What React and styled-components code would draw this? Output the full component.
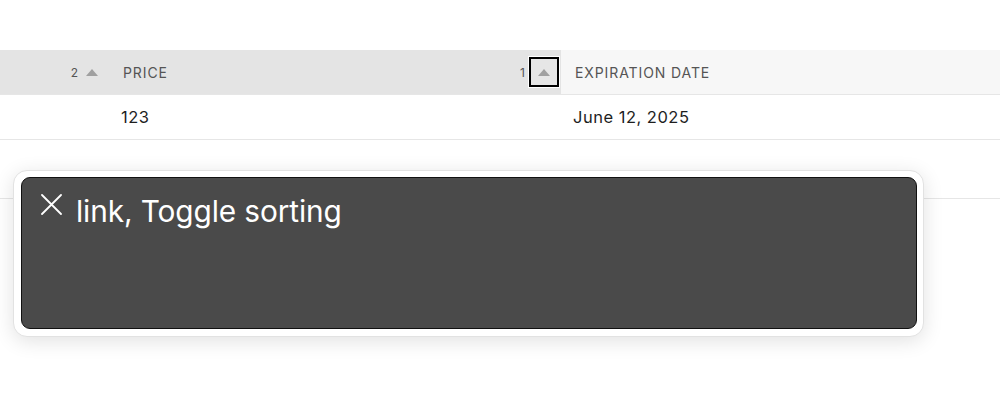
import React from "react";
import styled, { createGlobalStyle } from "styled-components";

const Global = createGlobalStyle`
  html, body { margin: 0; padding: 0; background: #fff; }
  body { font-family: Inter, "Liberation Sans", Arial, sans-serif; width: 1000px; height: 414px; overflow: hidden; position: relative; }
`;

const Page = styled.div`
  position: relative;
  width: 1000px;
  height: 414px;
  padding-top: 50px;
  box-sizing: border-box;
`;

const Row = styled.div`
  display: grid;
  grid-template-columns: 110px 451px 1fr;
  height: ${(p) => p.$h}px;
  border-bottom: 1px solid #e6e6e6;
  box-sizing: border-box;
`;

const HeadCell = styled.div`
  display: flex;
  align-items: center;
  background: ${(p) => (p.$sorted ? "#e4e4e4" : "#f7f7f7")};
  padding: 0 ${(p) => p.$pr || 0}px 0 ${(p) => p.$pl || 0}px;
  justify-content: ${(p) => (p.$end ? "flex-end" : "flex-start")};
  font-size: 14px;
  letter-spacing: 0.9px;
  color: #555;
  gap: 4px;
`;

const Label = styled.span`
  flex: 1;
`;

const Cell = styled.div`
  display: flex;
  align-items: center;
  padding-left: ${(p) => p.$pl || 0}px;
  font-size: 16.5px;
  color: #1e1e1e;
  letter-spacing: 0.5px;
`;

const SortNum = styled.span`
  font-size: 12px;
  letter-spacing: 0;
  color: #555;
`;

const SortBtn = styled.span`
  display: flex;
  align-items: center;
  justify-content: center;
  width: ${(p) => (p.$focus ? 26 : 14)}px;
  height: ${(p) => (p.$focus ? 26 : 14)}px;
  margin-left: ${(p) => (p.$focus ? 0 : 3)}px;
  border: ${(p) => (p.$focus ? "2px solid #000" : "none")};
  outline: ${(p) => (p.$focus ? "1px solid #fff" : "none")};
  background: ${(p) => (p.$focus ? "#e6e6e6" : "transparent")};
`;

const Arrow = () => (
  <svg width="12" height="7" viewBox="0 0 12 7">
    <path d="M6 0 L12 7 L0 7 Z" fill="#a0a0a0" />
  </svg>
);

const Overlay = styled.div`
  position: absolute;
  left: 13px;
  top: 170px;
  width: 911px;
  height: 167px;
  box-sizing: border-box;
  background: #fff;
  border-radius: 14px;
  border: 1px solid #e2e2e2;
  box-shadow: 0 4px 20px rgba(0, 0, 0, 0.12);
  padding: 6px 6px 7px 7px;
`;

const Panel = styled.div`
  height: 100%;
  box-sizing: border-box;
  background: #4a4a4a;
  border: 1.5px solid #111;
  border-radius: 9px;
  display: flex;
  align-items: flex-start;
  gap: 14px;
  padding: 16px 18px 16px 19px;
  color: #fff;
`;

const Close = styled.svg`
  flex: none;
  margin-top: 0;
`;

const Speech = styled.div`
  font-size: 29.8px;
  line-height: 34px;
  letter-spacing: -0.1px;
  color: #fff;
`;

export default function App() {
  return (
    <Page>
      <Global />
      <Row $h={45}>
        <HeadCell $sorted $end $pr={11}>
          <SortNum>2</SortNum>
          <SortBtn><Arrow /></SortBtn>
        </HeadCell>
        <HeadCell $sorted $pl={13} $pr={2}>
          <Label>PRICE</Label>
          <SortNum>1</SortNum>
          <SortBtn $focus><Arrow /></SortBtn>
        </HeadCell>
        <HeadCell $pl={14}>
          <Label>EXPIRATION DATE</Label>
        </HeadCell>
      </Row>
      <Row $h={45}>
        <Cell />
        <Cell $pl={11}>123</Cell>
        <Cell $pl={12}>June 12, 2025</Cell>
      </Row>
      <Row $h={59}>
        <Cell />
        <Cell />
        <Cell />
      </Row>
      <Overlay>
        <Panel>
          <Close width="21" height="21" viewBox="0 0 21 21">
            <path d="M1 1 L20 20 M20 1 L1 20" stroke="#fff" strokeWidth="1.8" strokeLinecap="round" />
          </Close>
          <Speech>link, Toggle sorting</Speech>
        </Panel>
      </Overlay>
    </Page>
  );
}
